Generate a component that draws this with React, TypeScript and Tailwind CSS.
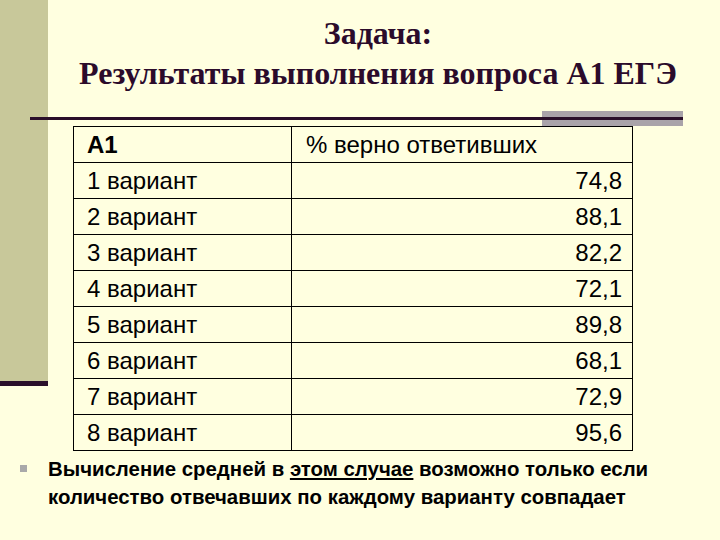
import React from "react";

const rows: [string, string][] = [
  ["1 вариант", "74,8"],
  ["2 вариант", "88,1"],
  ["3 вариант", "82,2"],
  ["4 вариант", "72,1"],
  ["5 вариант", "89,8"],
  ["6 вариант", "68,1"],
  ["7 вариант", "72,9"],
  ["8 вариант", "95,6"],
];

export default function App() {
  return (
    <div className="relative flex w-[720px] h-[540px] overflow-hidden bg-[#FFFFE0]">
      {/* left strip */}
      <div className="flex flex-col w-[48px] shrink-0">
        <div className="h-[381px] bg-[#C8C89A]" />
        <div className="h-[5px] bg-[#2A0F2A]" />
      </div>

      {/* rule under title */}
      <div className="absolute left-[542px] top-[111px] w-[141px] h-[15px] bg-[#A9A3A9]" />
      <div className="absolute left-[30px] top-[117px] w-[653px] h-[3px] bg-[#2A0F2A]" />

      <div className="flex flex-col flex-1">
        <div
          className="flex flex-col items-center pt-[13px] pr-[12px] text-[32px] leading-[40px] font-bold text-[#2B0B2B]"
          style={{ fontFamily: '"Liberation Serif", serif' }}
        >
          <div>Задача:</div>
          <div>Результаты выполнения вопроса А1 ЕГЭ</div>
        </div>

        <table
          className="mt-[33px] ml-[25px] w-[560px] border-collapse text-[24px] leading-[34px] text-black"
          style={{ fontFamily: '"Liberation Sans", Arial, sans-serif' }}
        >
          <tbody>
            <tr className="h-[36px]">
              <td className="w-[218px] border border-black pl-[13px] font-bold">А1</td>
              <td className="border border-black pl-[14px]">% верно ответивших</td>
            </tr>
            {rows.map(([name, value]) => (
              <tr key={name} className="h-[36px]">
                <td className="border border-black pl-[13px]">{name}</td>
                <td className="border border-black pr-[10px] text-right">{value}</td>
              </tr>
            ))}
          </tbody>
        </table>

        <div
          className="flex mt-[4px] -ml-[28px] text-[20.4px] leading-[28px] font-bold text-black"
          style={{ fontFamily: '"Liberation Sans", Arial, sans-serif' }}
        >
          <div className="w-[7px] h-[7px] mt-[10px] bg-[#A9A9A9] shrink-0" />
          <div className="ml-[21px] w-[640px]">
            Вычисление средней в <span className="underline">этом случае</span> возможно только если
            количество отвечавших по каждому варианту совпадает
          </div>
        </div>
      </div>
    </div>
  );
}
